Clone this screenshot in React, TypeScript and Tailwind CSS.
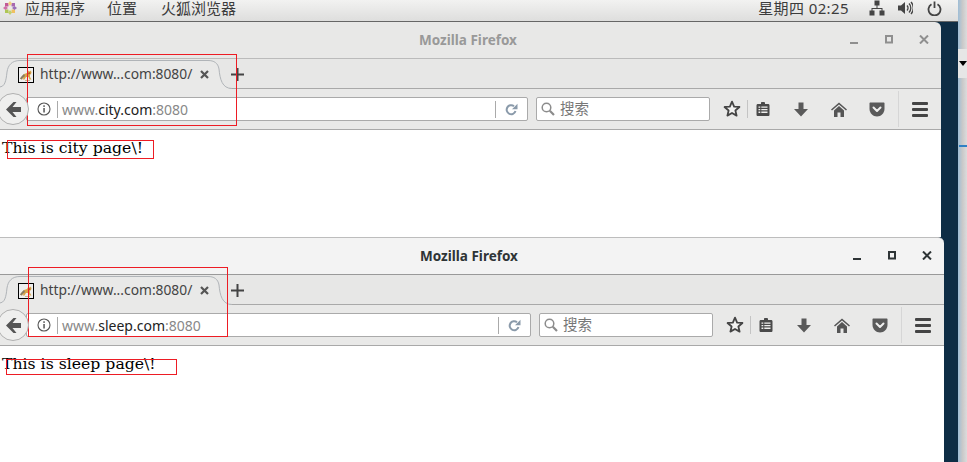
import React from "react";

const UI = "font-['Noto_Sans','Noto_Sans_CJK_SC',sans-serif]";

function Logo() {
  return (
    <svg width="14" height="14" viewBox="0 0 14 14">
      <path d="M2 2h3.500v3.500H2z" fill="#c25a96" />
      <path d="M8.500 2H12v3.500H8.500z" fill="#a868b0" />
      <path d="M2 8.500h3.500V12H2z" fill="#aec654" />
      <path d="M8.500 8.500H12V12H8.500z" fill="#f0c060" />
      <path d="M7 0l2 2.500L7 5 5 2.500z" fill="#f0cf80" />
      <path d="M14 7l-2.500 2L9 7l2.500-2z" fill="#9a70b8" />
      <path d="M7 14l-2-2.500L7 9l2 2.500z" fill="#c0d070" />
      <path d="M0 7l2.500-2L5 7 2.500 9z" fill="#d070a8" />
      <rect x="5.500" y="5.500" width="3" height="3" fill="#efe9e2" />
    </svg>
  );
}

function Network() {
  return (
    <svg width="16" height="16" viewBox="0 0 16 16" fill="#444">
      <rect x="5.500" y="0.500" width="5" height="5" />
      <rect x="0.500" y="10.500" width="5" height="5" />
      <rect x="10.500" y="10.500" width="5" height="5" />
      <path d="M7.500 5h1v3h5v3h-1V9H3.500v2h-1V8h5z" />
    </svg>
  );
}

function Volume() {
  return (
    <svg width="16" height="16" viewBox="0 0 16 16" fill="none">
      <path d="M1 5.500h3L8 2v12L4 10.500H1z" fill="#444" />
      <path d="M10 5.500a3.500 3.500 0 0 1 0 5M12 3.500a6.500 6.500 0 0 1 0 9M14 2a9 9 0 0 1 0 12" stroke="#444" strokeWidth="1.300" />
    </svg>
  );
}

function Power() {
  return (
    <svg width="15" height="15" viewBox="0 0 15 15" fill="none" stroke="#444" strokeWidth="1.800">
      <path d="M4.500 3.300a6 6 0 1 0 6 0" />
      <path d="M7.500 0.500v6.500" />
    </svg>
  );
}

function Favicon() {
  return (
    <div className="w-4 h-4 border border-black bg-[#efefef] shrink-0 flex items-center justify-center">
      <svg width="14" height="14" viewBox="0 0 14 14">
        <path d="M1 10.500L3 8l2-2 3-1 1.500-2.500 1 1 1.500-1 .5 2.500-1.500 2v2l1.500 2.500h-2L9.500 9H7l-1.500 2.500H3.500L5 9.500 2.500 11.500z" fill="#d8a648" />
        <path d="M1 10.500L3 8l2-2 1 2-2 1.500-1.500 2z" fill="#857c68" />
        <path d="M9 5l2-1 .5 1.500-2 1z" fill="#b05a20" />
        <path d="M6 12h5v1H6z" fill="#c8b890" />
      </svg>
    </div>
  );
}

function TabShape() {
  return (
    <svg className="absolute left-0 top-0" width="240" height="30" viewBox="0 0 240 30">
      <path d="M-1 28C5 28 6 22 7 13 8 6 12 1.500 20 1.500H208C214 1.500 218 4 219 10 220 20 222 29.500 232 29.500V30H-1z" fill="#e9e9e8" />
      <path d="M-1 28C5 28 6 22 7 13 8 6 12 1.500 20 1.500H208C214 1.500 218 4 219 10 220 20 222 29.500 232 29.500" fill="none" stroke="#b0b4b8" />
    </svg>
  );
}

function InfoIcon() {
  return (
    <svg width="14" height="14" viewBox="0 0 14 14" fill="none">
      <circle cx="7" cy="7" r="6" stroke="#555" strokeWidth="1.100" />
      <rect x="6.300" y="6" width="1.500" height="4.500" fill="#555" />
      <rect x="6.300" y="3.300" width="1.500" height="1.600" fill="#555" />
    </svg>
  );
}

function Reload() {
  return (
    <svg width="13" height="13" viewBox="0 0 13 13" fill="none">
      <path d="M10.500 8A4.500 4.500 0 1 1 9 3.200" stroke="#8a9aaa" strokeWidth="2" />
      <path d="M12.500 .8v5.400H7z" fill="#8a9aaa" />
    </svg>
  );
}

function Magnifier() {
  return (
    <svg width="14" height="14" viewBox="0 0 14 14" fill="none" stroke="#8c8c8c">
      <circle cx="5.500" cy="5.500" r="4.300" strokeWidth="1.500" />
      <path d="M8.800 8.800L13 13" strokeWidth="2.200" />
    </svg>
  );
}

function Star() {
  return (
    <svg width="18" height="18" viewBox="0 0 16 16">
      <path d="M8 1.500l1.900 4.300 4.700.4-3.600 3.100 1.100 4.600L8 11.500l-4.100 2.400L5 9.300 1.400 6.200l4.700-.4z" fill="#f2f2f1" stroke="#444" strokeWidth="1.600" strokeLinejoin="round" />
    </svg>
  );
}

function Clip() {
  return (
    <svg width="14" height="16" viewBox="0 0 14 16">
      <path d="M2 3h3V1.500C5 .8 9 .8 9 1.500V3h3c1 0 1.500.5 1.500 1.500v9c0 1-.5 1.500-1.500 1.500H2c-1 0-1.500-.5-1.500-1.500v-9C.5 3.500 1 3 2 3z" fill="#4a4a4a" />
      <path d="M2.500 5.500h9v1.200h-9zM2.500 8h9v1.200h-9zM2.500 10.500h9v1.600h-9z" fill="#efefee" />
      <rect x="4.300" y="5" width="1" height="7.500" fill="#4a4a4a" />
    </svg>
  );
}

function Down() {
  return (
    <svg width="14" height="15" viewBox="0 0 14 15">
      <path d="M4.500 0.500h5V7H14L7 14.500 0 7h4.500z" fill="#5a5a5a" />
    </svg>
  );
}

function Home() {
  return (
    <svg width="16" height="15" viewBox="0 0 16 15">
      <path d="M8 .5L16 7.500l-1 1L8 2.500 1 8.500l-1-1z" fill="#555" />
      <path d="M8 4l5 4.500V15H9.500V10.500h-3V15H3V8.500z" fill="#555" />
    </svg>
  );
}

function Pocket() {
  return (
    <svg width="16" height="15" viewBox="0 0 16 15">
      <path d="M1.500 .5h13c.7 0 1 .4 1 1V7c0 4-3.500 7.500-7.500 7.500S.5 11 .5 7V1.500c0-.6.3-1 1-1z" fill="#5a5a5a" />
      <path d="M4.500 5.500L8 9l3.500-3.500" fill="none" stroke="#efefee" strokeWidth="2" strokeLinecap="round" strokeLinejoin="round" />
    </svg>
  );
}

function Menu() {
  return (
    <div className="flex flex-col gap-[3px]">
      <div className="w-4 h-[3px] rounded-[1px] bg-[#444]" />
      <div className="w-4 h-[3px] rounded-[1px] bg-[#444]" />
      <div className="w-4 h-[3px] rounded-[1px] bg-[#444]" />
    </div>
  );
}

function ToolbarIcon({ w, children }: { w: string; children: React.ReactNode }) {
  return <div className={`${w} h-6 flex items-center justify-center shrink-0`}>{children}</div>;
}

function Toolbar({ host }: { host: string }) {
  return (
    <div className="h-[41px] border-b border-[#a9a9a9] bg-[#e9e9e8] flex items-center">
      <div className="relative z-10 -ml-[3px] -mr-[3px] w-8 h-8 shrink-0 rounded-full border border-[#b0b0b0] bg-[#efefee] flex items-center justify-center pl-[1px]">
        <svg width="15" height="15" viewBox="0 0 15 15">
          <path d="M7.500 0L0 7.500 7.500 15h3L6.500 10H15V5H6.500l4-5z" fill="#555" />
        </svg>
      </div>
      <div className="flex-1 h-6 border border-[#aaa] rounded-[2px] bg-white flex items-center pl-[10px]">
        <InfoIcon />
        <div className="w-px h-[17px] bg-[#aaa] ml-[6px] mr-[4px]" />
        <span className="text-[14px] text-[#888] whitespace-nowrap">
          www.<span className="text-[#222]">{host}</span>:8080
        </span>
        <div className="flex-1" />
        <div className="w-px h-[17px] bg-[#aaa]" />
        <div className="w-[31px] flex items-center justify-center">
          <Reload />
        </div>
      </div>
      <div className="ml-2 w-[174px] h-6 shrink-0 border border-[#aaa] rounded-[2px] bg-white flex items-center pl-[4px]">
        <Magnifier />
        <span className="ml-[5px] text-[14.500px] text-[#777]">搜索</span>
      </div>
      <div className="ml-[7px]" />
      <ToolbarIcon w="w-[30px]"><Star /></ToolbarIcon>
      <div className="w-px h-[18px] bg-[#c4c4c4]" />
      <ToolbarIcon w="w-[30px]"><Clip /></ToolbarIcon>
      <div className="w-1" />
      <ToolbarIcon w="w-[38px]"><Down /></ToolbarIcon>
      <ToolbarIcon w="w-[38px]"><Home /></ToolbarIcon>
      <ToolbarIcon w="w-[38px]"><Pocket /></ToolbarIcon>
      <div className="w-px h-[36px] bg-[#d6d6d6] ml-[2px]" />
      <ToolbarIcon w="w-[42px]"><Menu /></ToolbarIcon>
    </div>
  );
}

function TabStrip() {
  return (
    <div className="relative h-[30px] border-b border-[#a9a9a9] bg-[#e7e7e6] flex items-center pl-[18px]">
      <TabShape />
      <div className="relative flex items-center h-full pt-[2px]">
        <Favicon />
        <span className="ml-[6px] w-[152px] text-[13.8px] text-[#444] whitespace-nowrap">http://www...com:8080/</span>
        <svg className="ml-[8px]" width="9" height="9" viewBox="0 0 9 9">
          <path d="M1 1l7 7M8 1L1 8" stroke="#555" strokeWidth="2.200" />
        </svg>
        <svg className="ml-[22px]" width="13" height="13" viewBox="0 0 13 13">
          <path d="M6.500 0v13M0 6.500h13" stroke="#444" strokeWidth="2" />
        </svg>
      </div>
    </div>
  );
}

function Window({
  active,
  host,
  width,
  pageHeight,
}: {
  active: boolean;
  host: string;
  width: string;
  pageHeight: string;
}) {
  const c = active ? "#2e3436" : "#8f8f8f";
  return (
    <div className={`${width} shrink-0 flex flex-col`}>
      <div
        className={
          active
            ? "h-[38px] border-t border-b border-t-[#bdbdbd] border-b-[#999] bg-[#f3f3f3] rounded-tr-[6px] flex items-center relative"
            : "h-[37px] border-b border-[#bbb] bg-[#e8e8e7] rounded-tr-[6px] flex items-center relative"
        }
      >
        <div className={active ? "flex-1 text-center text-[13.5px] font-bold text-[#2e3436] pr-[6px] pt-[1px]" : "flex-1 text-center text-[13.5px] font-bold text-[#999] pr-[5px] pt-[1px]"}>
          Mozilla Firefox
        </div>
        <div className="absolute right-[12px] top-[13px] flex items-start gap-[26px]">
          <svg width="9" height="9" viewBox="0 0 9 9"><rect x="0" y="7" width="8" height="2" fill={c} /></svg>
          <svg width="8" height="9" viewBox="0 0 8 9"><rect x="1" y="1" width="6" height="6.500" fill="none" stroke={c} strokeWidth="2" /></svg>
          <svg width="10" height="9" viewBox="0 0 10 9"><path d="M1 .5l8 8M9 .5l-8 8" stroke={c} strokeWidth="2" /></svg>
        </div>
      </div>
      <TabStrip />
      <Toolbar host={host} />
      <div className={`${pageHeight} bg-white pl-[2px] pt-[7px] text-[15.7px] leading-[22px] text-black font-['DejaVu_Serif',serif]`}>
        This is {host.split(".")[0]} page\!
      </div>
    </div>
  );
}

function RedBox({ cls }: { cls: string }) {
  return <div className={`absolute border border-[#ed1c24] pointer-events-none ${cls}`} />;
}

export default function App() {
  return (
    <div className={`relative w-[967px] h-[462px] overflow-hidden flex ${UI}`}>
      <div className="w-[958px] flex flex-col shrink-0">
        <div className="h-[22px] border-b border-[#666] bg-gradient-to-b from-[#f2f2f1] to-[#dededd] flex items-center pb-[5px] text-[15px] text-[#3c3c3c] leading-none">
          <div className="ml-[3px] w-[14px] shrink-0"><Logo /></div>
          <span className="ml-2">应用程序</span>
          <span className="ml-[22px]">位置</span>
          <span className="ml-6">火狐浏览器</span>
          <div className="flex-1" />
          <span className="text-[15px] tracking-[0.4px]">星期四 02:25</span>
          <div className="ml-[20px]"><Network /></div>
          <div className="ml-[12px]"><Volume /></div>
          <div className="ml-[14px] mr-[16px]"><Power /></div>
        </div>
        <div className="flex-1 bg-[#0e2d45] flex flex-col">
          <Window active={false} host="city.com" width="w-[941px]" pageHeight="h-[107px]" />
          <Window active host="sleep.com" width="w-[944px]" pageHeight="h-[116px]" />
        </div>
      </div>
      <div className="flex-1 relative bg-gradient-to-r from-[#9dbdd6] via-[#c9c9c9] to-[#dcdcdc]">
        <div className="absolute left-0 right-0 top-[49px] h-[29px] bg-[#e6e6e6] flex items-center justify-center">
          <div className="w-0 h-0 border-l-[4px] border-r-[4px] border-t-[5px] border-l-transparent border-r-transparent border-t-black" />
        </div>
        <div className="absolute left-px right-0 top-[145px] h-[2px] bg-[#2f80c4]" />
      </div>
      <RedBox cls="left-[27px] top-[54px] w-[210px] h-[72px]" />
      <RedBox cls="left-[7px] top-[140px] w-[147px] h-[19px]" />
      <RedBox cls="left-[28px] top-[267px] w-[200px] h-[70px]" />
      <RedBox cls="left-[6px] top-[359px] w-[171px] h-[16px]" />
    </div>
  );
}
